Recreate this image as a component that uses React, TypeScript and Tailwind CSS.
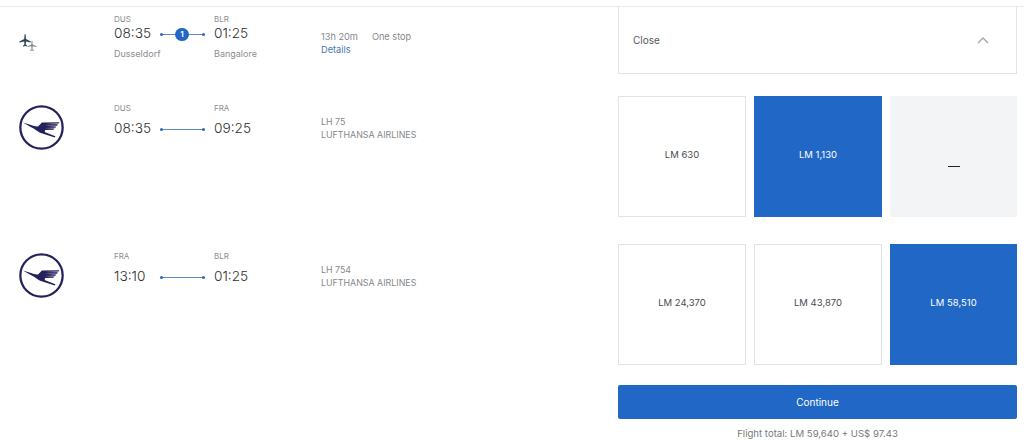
const font = 'font-["Inter","Liberation_Sans",sans-serif]';

function Crane() {
  return (
    <svg width="45" height="45" viewBox="0 0 44 44" fill="none">
      <circle cx="22" cy="22" r="20.7" stroke="#25215c" strokeWidth="2.2" />
      <path
        d="M3.8 17.2 L11 19.4 Q15.5 21.4 18.6 21 Q20.6 18.8 22.4 17 L39.5 16.8 L38.8 18.1 L25.5 18.5 L38 18.9 L37.2 20.2 L25 20.4 L36.4 20.9 L35.6 22.2 L24.6 22.4 L34.8 23 L33.6 24.2 L25.6 24.4 Q24.6 25.6 25.6 26.6 L35.6 30.6 L35 31.8 L23.6 28.2 Q20.4 27.4 17.8 25.4 Q15 22.8 11 21.2 Z"
        fill="#25215c"
      />
    </svg>
  );
}

function TwoPlanes() {
  return (
    <svg width="18" height="18" viewBox="0 0 18 18" fill="none">
      <path
        d="M5.6 0.3 L6.6 0.3 L7 5 L11.8 7.4 L11.8 8.6 L7 7.4 L6.8 10.6 L8.2 11.8 L8.2 12.5 L6.1 12 L4 12.5 L4 11.8 L5.4 10.6 L5.2 7.4 L0.4 8.6 L0.4 7.4 L5.2 5 Z"
        fill="#2f4553"
      />
      <path
        d="M12.6 6.8 L13.4 6.8 L13.7 10.4 L17.6 12.2 L17.6 13 L13.7 12.2 L13.5 15.2 L14.8 16.2 L14.8 16.9 L13 16.5 L11.2 16.9 L11.2 16.2 L12.5 15.2 L12.3 12.2 L8.4 13 L8.4 12.2 L12.3 10.4 Z"
        fill="#7f8c96"
      />
    </svg>
  );
}

function Line({ stops }: { stops?: number }) {
  return (
    <div className="relative flex h-[9px] w-[45px] items-center">
      <div className="h-px w-full bg-[#5b8ac6]" />
      <span className="absolute left-0 h-[3px] w-[3px] rounded-full bg-[#2a6bbd]" />
      <span className="absolute right-0 h-[3px] w-[3px] rounded-full bg-[#2a6bbd]" />
      {stops ? (
        <span className="absolute left-[15px] top-[-2px] flex h-[13px] w-[14px] items-center justify-center rounded-full bg-[#2167c6] text-[8px] font-bold text-white">
          {stops}
        </span>
      ) : null}
    </div>
  );
}

function Leg(props: { from: string; to: string; dep: string; arr: string; fromCity?: string; toCity?: string; stops?: number }) {
  return (
    <div className="w-[207px] shrink-0">
      <div className="flex h-[10px] items-center text-[8px] leading-none text-[#8a8d90]">
        <span className="w-[100px]">{props.from}</span>
        <span>{props.to}</span>
      </div>
      <div className={`flex h-[20px] items-center text-[13.7px] leading-none font-light text-[#2d2f31] ${props.fromCity ? "mt-0" : "mt-[6px]"}`}>
        <span className="w-[46px]">{props.dep}</span>
        <Line stops={props.stops} />
        <span className="ml-[9px]">{props.arr}</span>
      </div>
      {props.fromCity ? (
        <div className="mt-[4px] flex text-[9px] leading-[12px] text-[#8a8d90]">
          <span className="w-[100px]">{props.fromCity}</span>
          <span>{props.toCity}</span>
        </div>
      ) : null}
    </div>
  );
}

function Tile({ label, selected, empty, wide }: { label: string; selected?: boolean; empty?: boolean; wide?: boolean }) {
  const look = selected
    ? "bg-[#2167c6] text-white"
    : empty
      ? "bg-[#f2f4f6] text-[#222]"
      : "border border-[#e2e3e4] bg-white text-[#4a4c4e]";
  return (
    <div className={`flex h-[121px] items-center justify-center pb-[2px] text-[9.5px] ${wide ? "w-[128px]" : "w-[127px]"} ${look}`}>
      {empty ? <span className="mt-[22px] h-px w-[12px] bg-[#222]" /> : label}
    </div>
  );
}

function Info({ line1, line2 }: { line1: string; line2: string }) {
  return (
    <div className="text-[8.85px] leading-[12.5px] text-[#85888b]">
      <div>{line1}</div>
      <div>{line2}</div>
    </div>
  );
}

function SegmentRow({ from, to, dep, arr, flight, tiles }: {
  from: string; to: string; dep: string; arr: string; flight: string;
  tiles: { label: string; selected?: boolean; empty?: boolean }[];
}) {
  return (
    <div className="flex">
      <div className="flex w-[618px] shrink-0 pt-[7px]">
        <div className="w-[114px] shrink-0 pl-[19px] pt-[2px]"><Crane /></div>
        <Leg from={from} to={to} dep={dep} arr={arr} />
        <div className="pt-[13px]"><Info line1={flight} line2="LUFTHANSA AIRLINES" /></div>
      </div>
      <div className="flex w-[399px] gap-2">
        {tiles.map((t, i) => <Tile key={t.label} wide={i < 2} {...t} />)}
      </div>
    </div>
  );
}

export default function App() {
  return (
    <div className={`h-[443px] w-[1024px] overflow-hidden bg-white ${font}`}>
      <div className="mt-[6px] flex h-[68px] border-t border-[#e9eaeb]">
        <div className="flex w-[618px] shrink-0 pt-[7px]">
          <div className="w-[114px] shrink-0 pl-[19px] pt-[20px]"><TwoPlanes /></div>
          <Leg from="DUS" to="BLR" dep="08:35" arr="01:25" fromCity="Dusseldorf" toCity="Bangalore" stops={1} />
          <div className="pt-[16px] text-[9.2px] leading-[13px] text-[#85888b]">
            <div className="flex gap-[14px]"><span>13h 20m</span><span>One stop</span></div>
            <div className="text-[#4a74b4]">Details</div>
          </div>
        </div>
        <div className="flex w-[399px] items-center justify-between border border-t-0 border-[#e2e3e4] pl-[14px] pr-[27px] text-[10px] text-[#55585a]">
          <span>Close</span>
          <svg width="12" height="7" viewBox="0 0 12 7" fill="none">
            <path d="M1 6 L6 1 L11 6" stroke="#a4a7a9" strokeWidth="1.4" />
          </svg>
        </div>
      </div>

      <div className="mt-[22px]">
        <SegmentRow
          from="DUS" to="FRA" dep="08:35" arr="09:25" flight="LH 75"
          tiles={[{ label: "LM 630" }, { label: "LM 1,130", selected: true }, { label: "—", empty: true }]}
        />
      </div>
      <div className="mt-[27px]">
        <SegmentRow
          from="FRA" to="BLR" dep="13:10" arr="01:25" flight="LH 754"
          tiles={[{ label: "LM 24,370" }, { label: "LM 43,870" }, { label: "LM 58,510", selected: true }]}
        />
      </div>

      <div className="ml-[618px] mt-[20px] w-[399px]">
        <button type="button" className="block h-[34px] w-full rounded-[2px] bg-[#2167c6] text-[10px] text-white">
          Continue
        </button>
        <div className="mt-[9px] text-center text-[9.6px] leading-[12px] text-[#77797c]">
          Flight total: LM 59,640 + US$ 97.43
        </div>
      </div>
    </div>
  );
}
